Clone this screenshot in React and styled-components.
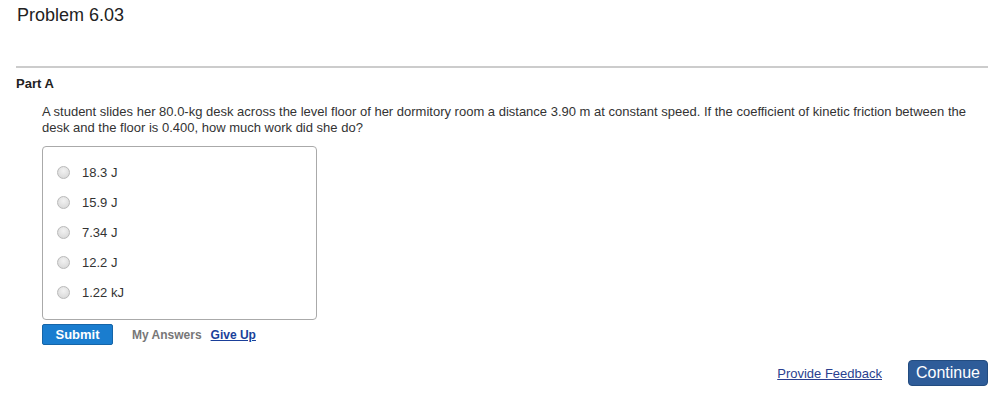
import styled, { createGlobalStyle } from "styled-components";

const GlobalStyle = createGlobalStyle`
  body {
    margin: 0;
    background: #fff;
    font-family: "Liberation Sans", Arial, sans-serif;
    color: #333;
  }
`;

const choices = ["18.3 J", "15.9 J", "7.34 J", "12.2 J", "1.22 kJ"];

const App = () => {
  return (
    <>
      <GlobalStyle />
      <Page>
        <Title>Problem 6.03</Title>
        <Rule />
        <PartTitle>Part A</PartTitle>
        <Body>
          <Question>
            A student slides her 80.0-kg desk across the level floor of her
            dormitory room a distance 3.90 m at constant speed. If the
            coefficient of kinetic friction between the desk and the floor is
            0.400, how much work did she do?
          </Question>
          <ChoiceBox>
            {choices.map((c) => (
              <Choice key={c}>
                <Radio />
                <span>{c}</span>
              </Choice>
            ))}
          </ChoiceBox>
          <Actions>
            <SubmitButton>Submit</SubmitButton>
            <MyAnswers>My Answers</MyAnswers>
            <GiveUp href="#">Give Up</GiveUp>
          </Actions>
        </Body>
        <Footer>
          <Feedback href="#">Provide Feedback</Feedback>
          <ContinueButton>Continue</ContinueButton>
        </Footer>
      </Page>
    </>
  );
};

export default App;

const Page = styled.div`
  width: 1000px;
  height: 402px;
  padding: 5px 12px 0 16px;
  box-sizing: border-box;
`;
const Title = styled.h1`
  margin: 0 0 0 1px;
  font-size: 18px;
  font-weight: 400;
  color: #222;
  line-height: 20px;
`;
const Rule = styled.div`
  height: 2px;
  background: #cccccc;
  margin-top: 41px;
`;
const PartTitle = styled.h2`
  margin: 8px 0 0;
  font-size: 13px;
  font-weight: 700;
  color: #222;
  line-height: 16px;
`;
const Body = styled.div`
  padding-left: 26px;
`;
const Question = styled.p`
  margin: 12px 0 0;
  width: 935px;
  font-size: 13px;
  line-height: 16px;
  color: #333;
`;
const ChoiceBox = styled.div`
  margin-top: 10px;
  width: 275px;
  height: 174px;
  border: 1px solid #aaa;
  border-radius: 4px;
  padding-top: 10px;
  box-sizing: border-box;
`;
const Choice = styled.label`
  display: flex;
  align-items: center;
  gap: 12px;
  height: 30px;
  padding-left: 14px;
  font-size: 13px;
  color: #333;
`;
const Radio = styled.span`
  width: 11px;
  height: 11px;
  border-radius: 50%;
  border: 1px solid #b9b9b9;
  background: radial-gradient(circle at 50% 35%, #f2f2f2, #d4d4d4);
`;
const Actions = styled.div`
  display: flex;
  align-items: center;
  margin-top: 4px;
  font-size: 12px;
  font-weight: 700;
`;
const SubmitButton = styled.button`
  width: 71px;
  height: 21px;
  border: 1px solid #1565a8;
  border-radius: 2px;
  background: #1a7dcf;
  color: #fff;
  font-family: inherit;
  font-size: 13px;
  font-weight: 700;
  padding: 0;
`;
const MyAnswers = styled.span`
  margin-left: 19px;
  color: #777;
`;
const GiveUp = styled.a`
  margin-left: 9px;
  color: #1a3f9a;
`;
const Footer = styled.div`
  display: flex;
  justify-content: flex-end;
  align-items: center;
  gap: 26px;
  margin-top: 15px;
`;
const Feedback = styled.a`
  font-size: 13px;
  color: #2a3f8f;
`;
const ContinueButton = styled.button`
  width: 80px;
  height: 26px;
  border: 1px solid #234c80;
  border-radius: 4px;
  background: #2e5c99;
  color: #fff;
  font-family: inherit;
  font-size: 16px;
  padding: 0;
`;
